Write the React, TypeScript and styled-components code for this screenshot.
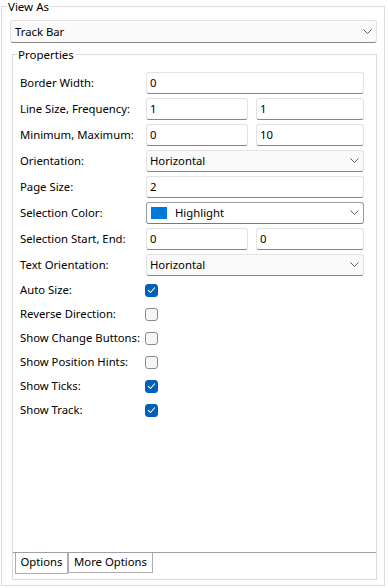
import React from "react";
import styled, { createGlobalStyle } from "styled-components";

const Global = createGlobalStyle`
  html, body { margin: 0; padding: 0; background: #ffffff; }
  body {
    font-family: "Noto Sans", "Liberation Sans", sans-serif;
    font-size: 11.3px;
    color: #000;
  }
  * { box-sizing: border-box; }
`;

const Window = styled.div`
  width: 388px;
  height: 588px;
  padding: 0 3px 0 1px;
`;

const OuterGroup = styled.fieldset`
  margin: 0;
  min-width: 0;
  width: 384px;
  height: 586px;
  border: 1px solid #dcdcdc;
  padding: 7px 7px 5px 8px;
  display: flex;
  flex-direction: column;
`;

const Legend = styled.legend<{ $shift: number }>`
  padding: 0 1px;
  margin-left: ${(p) => p.$shift}px;
  line-height: 13px;
  height: 13px;
  font-size: 11.5px;
`;

const InnerGroup = styled.fieldset`
  margin: 5px 0 0 2px;
  min-width: 0;
  flex: 1;
  border: 1px solid #dcdcdc;
  padding: 0 0 5px 0;
  display: flex;
  flex-direction: column;
`;

const TabControl = styled.div`
  flex: 1;
  display: flex;
  flex-direction: column;
`;

const TabPage = styled.div`
  flex: 1;
  padding: 11px 0 0 7px;
  border-bottom: 1px solid #a0a0a0;
  background: #fff;
`;

const TabStrip = styled.div`
  display: flex;
  padding-left: 2px;
  height: 21px;
  align-items: flex-start;
`;

const Tab = styled.div<{ $w: number; $active?: boolean }>`
  width: ${(p) => p.$w}px;
  height: ${(p) => (p.$active ? 21 : 20)}px;
  border: 1px solid #adadad;
  border-top: none;
  background: #fff;
  display: flex;
  align-items: center;
  justify-content: center;
  padding-bottom: ${(p) => (p.$active ? 3 : 2)}px;
  white-space: nowrap;
`;

const Form = styled.div`
  display: grid;
  grid-template-columns: 126px 218px;
  grid-auto-rows: 22px;
  row-gap: 4px;
  align-items: center;
`;

const CheckForm = styled(Form)`
  grid-auto-rows: 20px;
  margin-top: 4px;
`;

const Label = styled.div`
  white-space: nowrap;
  padding-bottom: 1px;
`;

const Pair = styled.div`
  display: grid;
  grid-template-columns: 102px 108px;
  column-gap: 8px;
  height: 22px;
`;

const TextBox = styled.div`
  height: 22px;
  border: 1px solid #e2e2e2;
  border-bottom-color: #868686;
  border-radius: 3px;
  background: #fff;
  padding-left: 3px;
  display: flex;
  align-items: center;
  padding-bottom: 1px;
`;

const Combo = styled.div<{ $strong?: boolean; $h?: number; $pl?: number }>`
  height: ${(p) => p.$h ?? 22}px;
  border: 1px solid ${(p) => (p.$strong ? "#9c9c9c" : "#e2e2e2")};
  border-bottom-color: ${(p) => (p.$strong ? "#7a7a7a" : "#868686")};
  border-radius: 3px;
  background: ${(p) => (p.$strong ? "#ffffff" : "#fafafa")};
  padding: 0 4px 1px ${(p) => p.$pl ?? 3}px;
  display: flex;
  align-items: center;
`;

const ComboText = styled.span`
  flex: 1;
  white-space: nowrap;
`;

const Swatch = styled.span<{ $color: string }>`
  width: 16px;
  height: 12px;
  background: ${(p) => p.$color};
  margin: 0 8px 0 1px;
  flex: none;
`;

const Chevron = styled.svg`
  flex: none;
  width: 9px;
  height: 5px;
`;

const Box = styled.div<{ $checked: boolean }>`
  width: 13px;
  height: 13px;
  margin-left: -1px;
  border-radius: 3px;
  border: 1px solid ${(p) => (p.$checked ? "#005fb8" : "#8a8a8a")};
  background: ${(p) => (p.$checked ? "#005fb8" : "#f6f6f6")};
  display: flex;
  align-items: center;
  justify-content: center;
`;

const ChevronDown = () => (
  <Chevron viewBox="0 0 9 5">
    <path d="M0.5 0.5 L4.5 4.5 L8.5 0.5" fill="none" stroke="#5f5f5f" strokeWidth="1" />
  </Chevron>
);

const Check = ({ checked }: { checked: boolean }) => (
  <Box $checked={checked}>
    {checked && (
      <svg width="9" height="8" viewBox="0 0 9 8">
        <path d="M1 4.2 L3.4 6.5 L8 1.5" fill="none" stroke="#fff" strokeWidth="1.1" />
      </svg>
    )}
  </Box>
);

type Field =
  | { label: string; kind: "text"; value: string }
  | { label: string; kind: "pair"; a: string; b: string }
  | { label: string; kind: "combo"; value: string; color?: string };

const fields: Field[] = [
  { label: "Border Width:", kind: "text", value: "0" },
  { label: "Line Size, Frequency:", kind: "pair", a: "1", b: "1" },
  { label: "Minimum, Maximum:", kind: "pair", a: "0", b: "10" },
  { label: "Orientation:", kind: "combo", value: "Horizontal" },
  { label: "Page Size:", kind: "text", value: "2" },
  { label: "Selection Color:", kind: "combo", value: "Highlight", color: "#0078d7" },
  { label: "Selection Start, End:", kind: "pair", a: "0", b: "0" },
  { label: "Text Orientation:", kind: "combo", value: "Horizontal" },
];

const checks: [string, boolean][] = [
  ["Auto Size:", true],
  ["Reverse Direction:", false],
  ["Show Change Buttons:", false],
  ["Show Position Hints:", false],
  ["Show Ticks:", true],
  ["Show Track:", true],
];

const renderControl = (f: Field) => {
  if (f.kind === "text") return <TextBox>{f.value}</TextBox>;
  if (f.kind === "pair")
    return (
      <Pair>
        <TextBox>{f.a}</TextBox>
        <TextBox>{f.b}</TextBox>
      </Pair>
    );
  return (
    <Combo $strong={!!f.color}>
      {f.color && <Swatch $color={f.color} />}
      <ComboText>{f.value}</ComboText>
      <ChevronDown />
    </Combo>
  );
};

export default function App() {
  return (
    <>
      <Global />
      <Window>
        <OuterGroup>
          <Legend $shift={-3}>View As</Legend>
          <Combo $h={23} $pl={4}>
            <ComboText>Track Bar</ComboText>
            <ChevronDown />
          </Combo>
          <InnerGroup>
            <Legend $shift={4}>Properties</Legend>
            <TabControl>
              <TabPage>
                <Form>
                  {fields.map((f) => (
                    <React.Fragment key={f.label}>
                      <Label>{f.label}</Label>
                      {renderControl(f)}
                    </React.Fragment>
                  ))}
                </Form>
                <CheckForm>
                  {checks.map(([label, on]) => (
                    <React.Fragment key={label}>
                      <Label>{label}</Label>
                      <Check checked={on} />
                    </React.Fragment>
                  ))}
                </CheckForm>
              </TabPage>
              <TabStrip>
                <Tab $w={53} $active>Options</Tab>
                <Tab $w={85}>More Options</Tab>
              </TabStrip>
            </TabControl>
          </InnerGroup>
        </OuterGroup>
      </Window>
    </>
  );
}
